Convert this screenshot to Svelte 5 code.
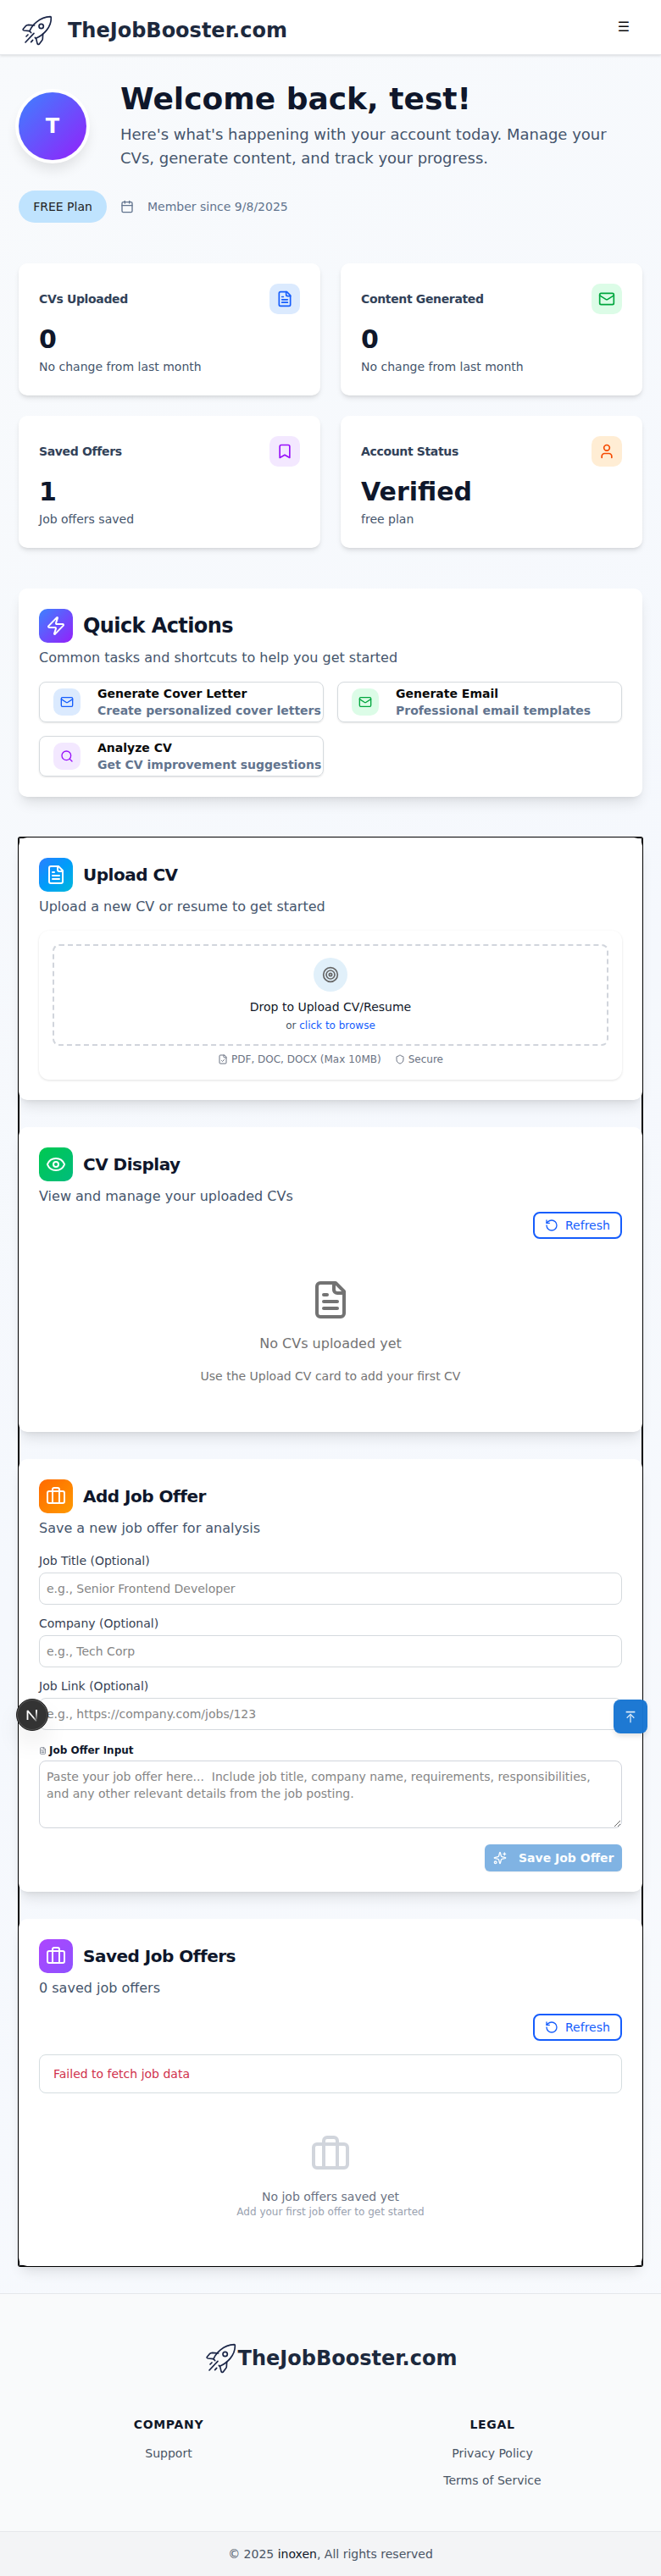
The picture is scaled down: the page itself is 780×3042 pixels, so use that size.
<script>
  const stats = [
    { label: 'CVs Uploaded', value: '0', note: 'No change from last month', icon: 'file', tone: 'blue' },
    { label: 'Content Generated', value: '0', note: 'No change from last month', icon: 'mail', tone: 'green' },
    { label: 'Saved Offers', value: '1', note: 'Job offers saved', icon: 'bookmark', tone: 'purple' },
    { label: 'Account Status', value: 'Verified', note: 'free plan', icon: 'user', tone: 'orange' }
  ];
  const actions = [
    { title: 'Generate Cover Letter', text: 'Create personalized cover letters', icon: 'mail', tone: 'blue' },
    { title: 'Generate Email', text: 'Professional email templates', icon: 'mail', tone: 'green' },
    { title: 'Analyze CV', text: 'Get CV improvement suggestions', icon: 'search', tone: 'purple' }
  ];
  const fields = [
    { label: 'Job Title (Optional)', hint: 'e.g., Senior Frontend Developer' },
    { label: 'Company (Optional)', hint: 'e.g., Tech Corp' },
    { label: 'Job Link (Optional)', hint: 'e.g., https://company.com/jobs/123' }
  ];
</script>

{#snippet icon(name, size)}
  <svg class="icon" width={size} height={size} viewBox="0 0 24 24" fill="none" stroke="currentColor" stroke-width="2" stroke-linecap="round" stroke-linejoin="round">
    {#if name === 'file'}
      <path d="M15 2H6a2 2 0 0 0-2 2v16a2 2 0 0 0 2 2h12a2 2 0 0 0 2-2V7Z" /><path d="M14 2v4a2 2 0 0 0 2 2h4" /><path d="M10 9H8" /><path d="M16 13H8" /><path d="M16 17H8" />
    {:else if name === 'filecheck'}
      <path d="M15 2H6a2 2 0 0 0-2 2v16a2 2 0 0 0 2 2h12a2 2 0 0 0 2-2V7Z" /><path d="M14 2v4a2 2 0 0 0 2 2h4" /><path d="m9 15 2 2 4-4" />
    {:else if name === 'mail'}
      <rect x="2" y="4" width="20" height="16" rx="2" /><path d="m22 7-8.97 5.7a1.94 1.94 0 0 1-2.06 0L2 7" />
    {:else if name === 'bookmark'}
      <path d="m19 21-7-4-7 4V5a2 2 0 0 1 2-2h10a2 2 0 0 1 2 2v16z" />
    {:else if name === 'user'}
      <path d="M19 21v-2a4 4 0 0 0-4-4H9a4 4 0 0 0-4 4v2" /><circle cx="12" cy="7" r="4" />
    {:else if name === 'search'}
      <circle cx="11" cy="11" r="8" /><path d="m21 21-4.3-4.3" />
    {:else if name === 'zap'}
      <path d="M4 14a1 1 0 0 1-.78-1.63l9.9-10.2a.5.5 0 0 1 .86.46l-1.92 6.02A1 1 0 0 0 13 10h7a1 1 0 0 1 .78 1.63l-9.9 10.2a.5.5 0 0 1-.86-.46l1.92-6.02A1 1 0 0 0 11 14z" />
    {:else if name === 'eye'}
      <path d="M2.062 12.348a1 1 0 0 1 0-.696 10.75 10.75 0 0 1 19.876 0 1 1 0 0 1 0 .696 10.75 10.75 0 0 1-19.876 0" /><circle cx="12" cy="12" r="3" />
    {:else if name === 'briefcase'}
      <path d="M16 20V4a2 2 0 0 0-2-2h-4a2 2 0 0 0-2 2v16" /><rect x="2" y="6" width="20" height="14" rx="2" />
    {:else if name === 'refresh'}
      <path d="M3 12a9 9 0 1 0 9-9 9.75 9.75 0 0 0-6.74 2.74L3 8" /><path d="M3 3v5h5" />
    {:else if name === 'calendar'}
      <path d="M8 2v4" /><path d="M16 2v4" /><rect x="3" y="4" width="18" height="18" rx="2" /><path d="M3 10h18" />
    {:else if name === 'target'}
      <circle cx="12" cy="12" r="10" /><circle cx="12" cy="12" r="6" /><circle cx="12" cy="12" r="2" />
    {:else if name === 'shield'}
      <path d="M20 13c0 5-3.5 7.5-7.66 8.95a1 1 0 0 1-.67-.01C7.5 20.5 4 18 4 13V6a1 1 0 0 1 1-1c2 0 4.5-1.2 6.24-2.72a1.17 1.17 0 0 1 1.52 0C14.51 3.81 17 5 19 5a1 1 0 0 1 1 1z" />
    {:else if name === 'sparkles'}
      <path d="M9.937 15.5A2 2 0 0 0 8.5 14.063l-6.135-1.582a.5.5 0 0 1 0-.962L8.5 9.936A2 2 0 0 0 9.937 8.5l1.582-6.135a.5.5 0 0 1 .963 0L14.063 8.5A2 2 0 0 0 15.5 9.937l6.135 1.581a.5.5 0 0 1 0 .964L15.5 14.063a2 2 0 0 0-1.437 1.437l-1.582 6.135a.5.5 0 0 1-.963 0z" /><path d="M20 3v4" /><path d="M22 5h-4" /><circle cx="4" cy="20" r="2" />
    {:else if name === 'top'}
      <path d="M4 4h16" stroke-width="2.6" stroke-linecap="butt" /><path d="M12 23V9" stroke-linecap="butt" /><path d="m5.5 14.5 6.5-6.5 6.5 6.5" stroke-linecap="butt" stroke-linejoin="miter" />
    {/if}
  </svg>
{/snippet}

{#snippet rocket()}
  <svg class="rocket" width="36" height="36" viewBox="49 35 108 108" fill="none" stroke="#1a2547" stroke-width="5" stroke-linecap="round" stroke-linejoin="round">
    <path d="M76 91C84 70 110 42 149 40q3 0 3 3C153 78 125 105 98 117" />
    <path d="M93 71L72 69Q66 69 62 73L53 84Q51 88 56 89L75 91Q79 93 81 97" />
    <path d="M123 101L122 118Q122 122 119 125L110 137Q105 141 103 135L99 118L95 114" />
    <circle cx="117" cy="74" r="8" />
    <path d="M91 99L61 131M70 104l-6 6M87 123l-6 7" />
  </svg>
{/snippet}

{#snippet head(name, tone, title, text)}
  <div class="head">
    <div class="tile {tone}">{@render icon(name, 24)}</div>
    <h3>{title}</h3>
  </div>
  <p class="desc">{text}</p>
{/snippet}

{#snippet refresh()}
  <button class="refresh">{@render icon('refresh', 16)}<span>Refresh</span></button>
{/snippet}

<div class="page">
  <header>
    <div class="brand">{@render rocket()}<span>TheJobBooster.com</span></div>
    <span class="menu">☰</span>
  </header>

  <main>
    <section class="welcome">
      <div class="avatar">T</div>
      <div class="greet">
        <h1>Welcome back, test!</h1>
        <p>Here's what's happening with your account today. Manage your CVs, generate content, and track your progress.</p>
      </div>
    </section>
    <div class="meta">
      <span class="pill">FREE Plan</span>
      {@render icon('calendar', 16)}
      <span class="since">Member since 9/8/2025</span>
    </div>

    <section class="stats">
      {#each stats as s}
        <div class="stat">
          <div class="stat-top"><span>{s.label}</span><div class="soft {s.tone}">{@render icon(s.icon, 20)}</div></div>
          <div class="value">{s.value}</div>
          <div class="note">{s.note}</div>
        </div>
      {/each}
    </section>

    <section class="card quick">
      {@render head('zap', 'g-violet', 'Quick Actions', 'Common tasks and shortcuts to help you get started')}
      <div class="actions">
        {#each actions as a}
          <div class="action">
            <div class="soft small {a.tone}">{@render icon(a.icon, 16)}</div>
            <div class="action-text"><b>{a.title}</b><span>{a.text}</span></div>
          </div>
        {/each}
      </div>
    </section>

    <div class="frame">
      <section class="card upload">
        {@render head('file', 'g-blue', 'Upload CV', 'Upload a new CV or resume to get started')}
        <div class="panel">
          <div class="drop">
            <div class="disc">{@render icon('target', 20)}</div>
            <div class="drop-title">Drop to Upload CV/Resume</div>
            <div class="drop-sub">or <a>click to browse</a></div>
          </div>
          <div class="facts">
            <span>{@render icon('filecheck', 12)}PDF, DOC, DOCX (Max 10MB)</span>
            <span>{@render icon('shield', 12)}Secure</span>
          </div>
        </div>
      </section>

      <section class="card display">
        {@render head('eye', 'g-green', 'CV Display', 'View and manage your uploaded CVs')}
        {@render refresh()}
        <div class="empty-cv">
          {@render icon('file', 48)}
          <div class="big">No CVs uploaded yet</div>
          <div class="sub">Use the Upload CV card to add your first CV</div>
        </div>
      </section>

      <section class="card add">
        {@render head('briefcase', 'g-orange', 'Add Job Offer', 'Save a new job offer for analysis')}
        <div class="form">
          {#each fields as f}
            <label><span>{f.label}</span><input placeholder={f.hint} /></label>
          {/each}
          <div class="offer-label">{@render icon('file', 9)}<b>Job Offer Input</b></div>
          <textarea placeholder="Paste your job offer here...  Include job title, company name, requirements, responsibilities, and any other relevant details from the job posting."></textarea>
          <button class="save">{@render icon('sparkles', 16)}<span>Save Job Offer</span></button>
        </div>
      </section>

      <section class="card saved">
        {@render head('briefcase', 'g-purple', 'Saved Job Offers', '0 saved job offers')}
        {@render refresh()}
        <div class="error">Failed to fetch job data</div>
        <div class="empty-jobs">
          {@render icon('briefcase', 48)}
          <div class="none">No job offers saved yet</div>
          <div class="tip">Add your first job offer to get started</div>
        </div>
      </section>
    </div>
  </main>

  <footer>
    <div class="brand">{@render rocket()}<span>TheJobBooster.com</span></div>
    <div class="cols">
      <div><h4>COMPANY</h4><a>Support</a></div>
      <div><h4>LEGAL</h4><a>Privacy Policy</a><a>Terms of Service</a></div>
    </div>
  </footer>
  <div class="copy">© 2025 <span>inoxen</span>, All rights reserved</div>

  <div class="dev">
    <svg width="38" height="38" viewBox="0 0 38 38">
      <defs>
        <linearGradient id="fadeA" x1="14" y1="14" x2="25" y2="27" gradientUnits="userSpaceOnUse"><stop offset=".6" stop-color="#fff" /><stop offset="1" stop-color="#fff" stop-opacity=".1" /></linearGradient>
        <linearGradient id="fadeB" x1="0" y1="13" x2="0" y2="25" gradientUnits="userSpaceOnUse"><stop offset=".2" stop-color="#fff" /><stop offset="1" stop-color="#fff" stop-opacity=".1" /></linearGradient>
      </defs>
      <path d="M13.5 25V14L24 26.5" fill="none" stroke="url(#fadeA)" stroke-width="1.8" stroke-linejoin="bevel" />
      <path d="M24 13v11.5" stroke="url(#fadeB)" stroke-width="1.8" />
    </svg>
  </div>
  <div class="totop">{@render icon('top', 16)}</div>
</div>

<style>
  :global(body) { margin: 0; }
  .page { position: relative; height: 3042px; overflow: hidden; display: flex; flex-direction: column; box-sizing: border-box; font-family: "DejaVu Sans", sans-serif; font-size: 14px; line-height: 20px; color: #0f172b; background: linear-gradient(135deg, #f8fafc 0%, #f5f8fd 50%, #f8fafd 100%); }
  .page :global(*) { box-sizing: border-box; }
  .icon, .rocket { display: block; flex: none; }
  h1, h3, h4, p { margin: 0; }
  button, input, textarea { font-family: inherit; }

  header { height: 65px; flex: none; background: #fff; border-bottom: 1px solid #e5e7eb; box-shadow: 0 1px 3px rgba(0, 0, 0, .12); display: flex; justify-content: space-between; padding: 0 37px 0 26px; }
  .brand { display: flex; align-items: center; font-size: 24px; line-height: 32px; font-weight: 700; color: #1d293d; }
  header .brand { gap: 18px; padding-top: 7px; }
  .menu { font-size: 16px; line-height: 24px; padding-top: 20px; color: #0a0a0a; }

  main { padding: 0 22px; flex: none; height: 2643px; display: flex; flex-direction: column; }
  .welcome { display: flex; gap: 40px; padding-top: 27px; }
  .avatar { width: 80px; height: 80px; margin-top: 17px; border-radius: 50%; flex: none; background: linear-gradient(135deg, #3d82ff, #9420fa); box-shadow: 0 0 0 4px #fff, 0 10px 15px 1px rgba(0, 0, 0, .1); color: #fff; font-weight: 700; font-size: 24px; display: flex; align-items: center; justify-content: center; }
  h1 { font-size: 36px; line-height: 45px; font-weight: 700; padding-top: 2px; }
  .greet p { font-size: 18px; line-height: 28px; margin-top: 6px; color: #45556c; }
  .meta { display: flex; align-items: center; margin-top: 24px; color: #62748e; height: 38px; }
  .pill { height: 38px; width: 104px; margin-right: 16px; border-radius: 19px; background: #bfe3fe; color: #222; display: flex; align-items: center; justify-content: center; }
  .since { margin-left: 16px; }

  .stats { display: grid; grid-template-columns: 1fr 1fr; gap: 24px; margin-top: 48px; }
  .stat { height: 156px; background: #fff; border-radius: 10px; padding: 24px; box-shadow: 0 4px 6px -1px rgba(0, 0, 0, .1), 0 2px 4px -2px rgba(0, 0, 0, .1); }
  .stat-top { display: flex; justify-content: space-between; align-items: center; font-weight: 700; color: #314158; letter-spacing: -.35px; }
  .soft { width: 36px; height: 36px; border-radius: 10px; display: flex; align-items: center; justify-content: center; flex: none; }
  .small { width: 32px; height: 32px; }
  .blue { background: #dbeafe; color: #155dfc; }
  .green { background: #dcfce7; color: #00a63e; }
  .purple { background: #f3e8ff; color: #9810fa; }
  .orange { background: #ffedd4; color: #f54900; }
  .value { font-size: 30px; line-height: 36px; font-weight: 700; margin-top: 12px; }
  .note { margin-top: 4px; color: #45556c; }

  .card { background: #fff; border-radius: 10px; padding: 24px; box-shadow: 0 10px 15px -3px rgba(0, 0, 0, .1), 0 4px 6px -4px rgba(0, 0, 0, .1); }
  .head { display: flex; align-items: center; gap: 12px; height: 40px; }
  .tile { width: 40px; height: 40px; border-radius: 10px; color: #fff; display: flex; align-items: center; justify-content: center; }
  .g-violet { background: linear-gradient(135deg, #3d82ff, #9420fa); }
  .g-blue { background: linear-gradient(135deg, #2b7fff, #009cfa 50%, #00b8db); }
  .g-green { background: linear-gradient(135deg, #00c950, #00bc7d); }
  .g-orange { background: linear-gradient(135deg, #ff6900, #fe9a00); }
  .g-purple { background: linear-gradient(135deg, #ad46ff, #8e51ff); }
  h3 { font-size: 20px; line-height: 28px; font-weight: 700; letter-spacing: -.5px; }
  .quick h3 { font-size: 24px; line-height: 32px; letter-spacing: -.6px; }
  .desc { font-size: 16px; line-height: 24px; margin-top: 6px; color: #45556c; }

  .quick { margin-top: 48px; height: 246px; }
  .actions { display: grid; grid-template-columns: 336px 336px; gap: 16px; margin-top: 16px; }
  .action { height: 48px; border: 1px solid #d5dade; border-radius: 8px; box-shadow: 0 1px 2px rgba(0, 0, 0, .1); display: flex; align-items: center; gap: 20px; padding-left: 16px; font-weight: 700; white-space: nowrap; color: #0a0a0a; }
  .action-text { display: flex; flex-direction: column; }
  .action-text span { color: #62748e; }

  .frame { margin-top: 48px; display: flex; flex-direction: column; gap: 32px; border-radius: 2px; box-shadow: 0 0 0 1px #000, inset 0 0 0 1px #000; }
  .upload { height: 310px; }
  .panel { margin-top: 16px; height: 176px; padding: 16px; border-radius: 12px; box-shadow: 0 1px 3px rgba(0, 0, 0, .12); }
  .drop { height: 120px; border: 2px dashed #d1d5dc; border-radius: 8px; display: flex; flex-direction: column; align-items: center; padding-top: 14px; }
  .disc { width: 40px; height: 40px; border-radius: 50%; background: #e1f0fa; color: #666; display: flex; align-items: center; justify-content: center; }
  .drop-title { margin-top: 8px; color: #101828; }
  .drop-sub { font-size: 12px; line-height: 16px; margin-top: 4px; color: #4a5565; }
  .drop-sub a { color: #155dfc; }
  .facts { display: flex; justify-content: center; gap: 16px; margin-top: 8px; font-size: 12px; line-height: 16px; color: #6a7282; }
  .facts span { display: flex; align-items: center; gap: 4px; }

  .display { height: 360px; display: flex; flex-direction: column; }
  .refresh { align-self: flex-end; width: 105px; height: 32px; margin-top: 6px; border: 2px solid #155dfc; border-radius: 8px; background: #fff; color: #155dfc; font-size: 14px; line-height: 20px; display: flex; align-items: center; gap: 8px; padding: 0 0 0 12px; flex: none; }
  .empty-cv, .empty-jobs { display: flex; flex-direction: column; align-items: center; }
  .empty-cv { padding-top: 48px; color: #737373; }
  .big { font-size: 16px; line-height: 24px; margin-top: 16px; }
  .sub { margin-top: 16px; }

  .add { height: 511px; }
  .form { display: flex; flex-direction: column; margin-top: 16px; }
  label { display: flex; flex-direction: column; gap: 4px; margin-bottom: 12px; color: #364153; }
  input { height: 38px; border: 1px solid #d5dade; border-radius: 8px; background: transparent; padding: 0 8px; font-size: 14px; }
  input::placeholder, textarea::placeholder { color: #858585; opacity: 1; }
  .offer-label { display: flex; align-items: center; gap: 3px; margin-top: 4px; font-size: 12px; line-height: 16px; height: 16px; color: #0f172b; }
  .offer-label .icon { color: #6a7282; }
  textarea { height: 80px; margin: 4px 0 0; border: 1px solid #d1d5dc; border-radius: 8px; background: transparent; padding: 8px; font-size: 14px; line-height: 20px; resize: vertical; overflow: hidden; }
  .save { align-self: flex-end; margin-top: 19px; width: 162px; height: 32px; border: 0; border-radius: 6px; background: #80b3e3; color: #fafdff; font-weight: 700; font-size: 14px; display: flex; align-items: center; gap: 14px; padding: 0 0 0 10px; box-shadow: 0 1px 2px rgba(0, 0, 0, .06); white-space: nowrap; }

  .saved { height: 410px; display: flex; flex-direction: column; }
  .saved .refresh { margin-top: 18px; }
  .error { margin-top: 16px; height: 46px; border: 1px solid #d5dde0; border-radius: 8px; padding: 12px 16px; color: #d0304b; }
  .empty-jobs { padding-top: 48px; color: #d1d5dc; }
  .none { margin-top: 16px; color: #6a7282; }
  .tip { font-size: 12px; line-height: 16px; color: #99a1af; }

  footer { height: 281px; flex: none; background: #f9fafb; border-top: 1px solid #e5e7eb; padding-top: 56px; }
  footer .brand { justify-content: center; gap: 2px; height: 40px; padding-left: 2px; }
  .cols { display: grid; grid-template-columns: 1fr 1fr; margin: 48px 8px 0; text-align: center; }
  .cols div { display: flex; flex-direction: column; }
  h4 { font-size: 14px; line-height: 20px; letter-spacing: .7px; color: #101828; margin-bottom: 14px; }
  .cols a { color: #4a5565; margin-bottom: 12px; }
  .copy { height: 53px; flex: none; background: #f3f4f6; border-top: 1px solid #e5e7eb; text-align: center; padding-top: 16px; color: #4a5565; }
  .copy span { color: #101828; }

  .dev { position: absolute; left: 19px; top: 2006px; width: 38px; height: 38px; border-radius: 50%; background: #333; border: 1px solid #222; box-shadow: inset 0 0 0 1px #555, 0 16px 32px -8px rgba(0, 0, 0, .2); }
  .dev svg { display: block; margin: -1px; }
  .totop { position: absolute; left: 724px; top: 2007px; width: 40px; height: 40px; border-radius: 8px; background: rgba(25, 118, 210, .98); color: #d9e9f8; display: flex; align-items: center; justify-content: center; box-shadow: 0 4px 6px -1px rgba(0, 0, 0, .12); }
</style>
